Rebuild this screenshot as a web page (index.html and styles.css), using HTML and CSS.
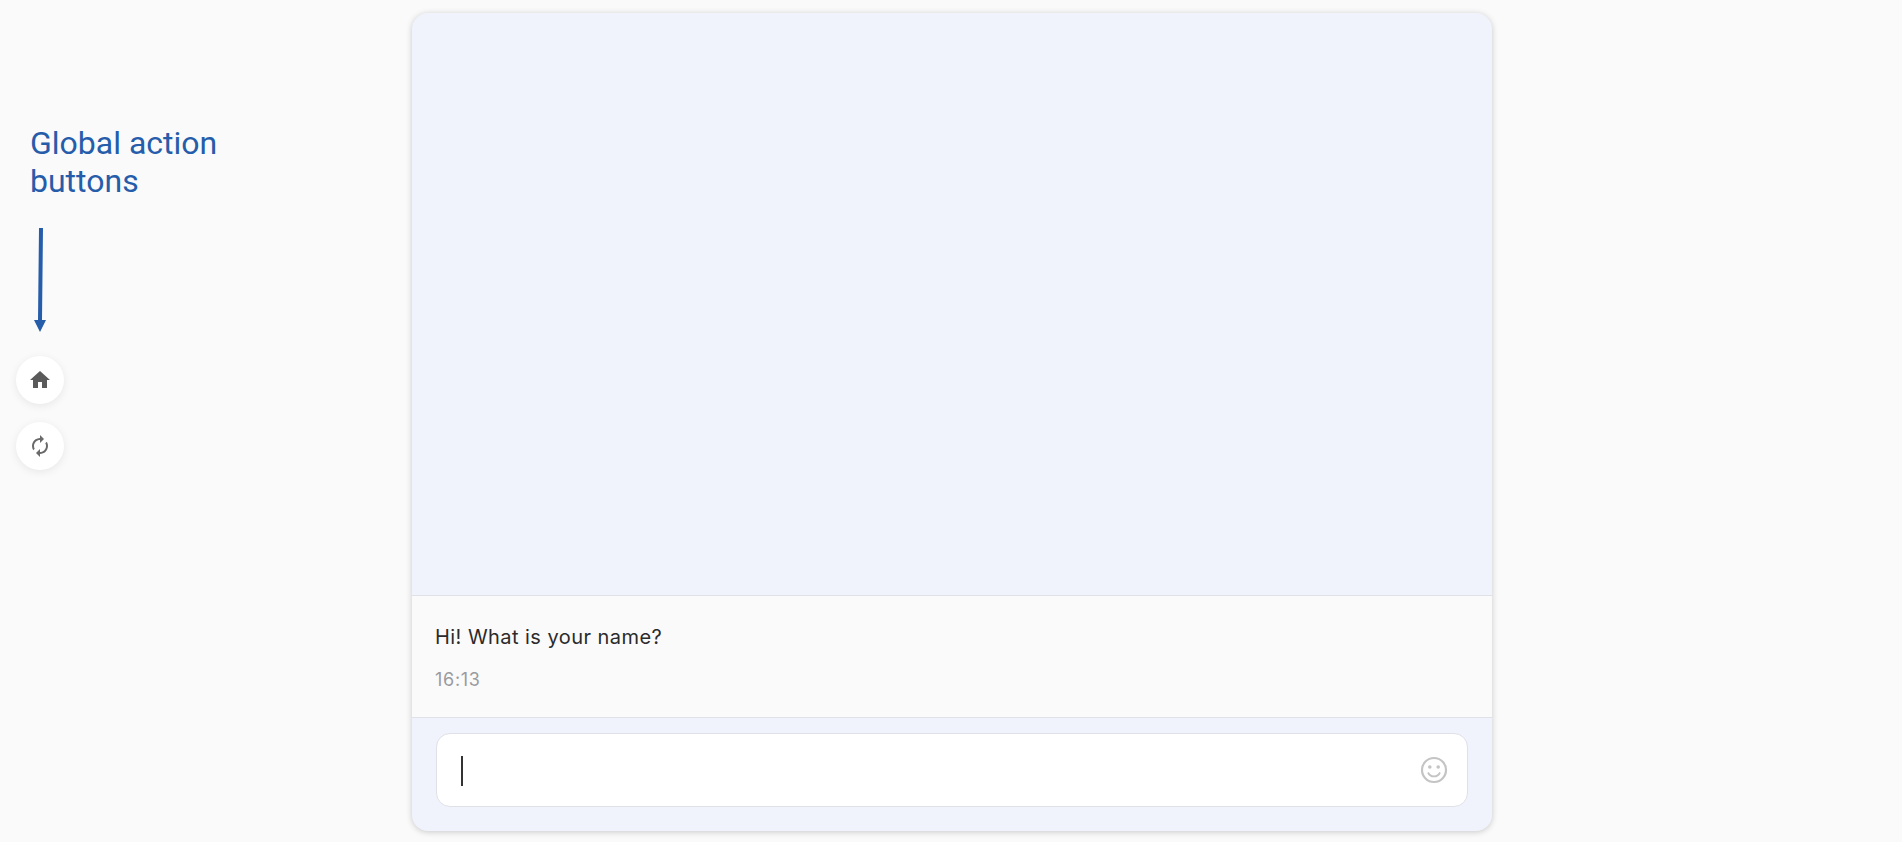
FILE: index.html
```html
<!DOCTYPE html>
<html lang="en">
<head>
    <meta charset="UTF-8">
    <title>Chat</title>
    <link rel="stylesheet" href="styles.css">
</head>
<body>
    <aside class="sidebar">
        <p class="note">Global action buttons</p>
        <svg class="arrow" width="14" height="104" viewBox="0 0 14 104">
            <path d="M6 0 L10 0 L9 92 L13 92 L7 104 L1 92 L5 92 Z" fill="#265dab"/>
        </svg>
        <button class="action">
            <svg width="24" height="24" viewBox="0 0 24 24"><path d="M10 20v-6h4v6h5v-8h3L12 3 2 12h3v8z" fill="#5a5a5a"/></svg>
        </button>
        <button class="action">
            <svg width="24" height="24" viewBox="0 0 24 24"><path d="M12 6v3l4-4-4-4v3c-4.420 0-8 3.580-8 8 0 1.570.46 3.030 1.240 4.260L6.700 14.800c-.45-.83-.7-1.790-.7-2.800 0-3.310 2.690-6 6-6zm6.760 1.740L17.300 9.200c.44.84.7 1.790.7 2.800 0 3.310-2.690 6-6 6v-3l-4 4 4 4v-3c4.420 0 8-3.580 8-8 0-1.570-.46-3.030-1.240-4.260z" fill="#6a6a6a"/></svg>
        </button>
    </aside>

    <main class="chat">
        <div class="history"></div>
        <div class="message">
            <p class="message-text">Hi! What is your name?</p>
            <span class="message-time">16:13</span>
        </div>
        <div class="composer">
            <div class="input-box">
                <span class="caret"></span>
                <svg class="smiley" width="30" height="30" viewBox="0 0 30 30">
                    <circle cx="15" cy="15" r="12" fill="none" stroke="#c4c4c4" stroke-width="2.200"/>
                    <circle cx="10.800" cy="12" r="1.800" fill="#c4c4c4"/>
                    <circle cx="19.200" cy="12" r="1.800" fill="#c4c4c4"/>
                    <path d="M9 17.500c1.200 2.600 3.300 3.900 6 3.900s4.800-1.300 6-3.900" fill="none" stroke="#c4c4c4" stroke-width="1.800"/>
                </svg>
            </div>
        </div>
    </main>
</body>
</html>
```

FILE: styles.css
```css
* {
    box-sizing: border-box;
}
html, body {
    height: 100%;
}
body {
    margin: 0;
    background: #fafafa;
    display: flex;
    overflow: hidden;
    font-family: Inter, "Noto Sans", sans-serif;
}
.sidebar {
    width: 412px;
    flex-shrink: 0;
    padding: 124px 0 0 16px;
}
.note {
    width: 210px;
    margin: 0 0 28px 14px;
    font-family: Roboto, sans-serif;
    font-size: 32px;
    line-height: 38px;
    color: #265dab;
}
.arrow {
    display: block;
    margin: 0 0 24px 17px;
}
.action {
    display: flex;
    align-items: center;
    justify-content: center;
    width: 48px;
    height: 48px;
    margin-bottom: 18px;
    padding: 0;
    border: 0;
    border-radius: 50%;
    background: #fff;
    box-shadow: 0 2px 8px rgba(0, 0, 0, 0.08);
}
.chat {
    width: 1080px;
    height: 818px;
    margin-top: 13px;
    display: flex;
    flex-direction: column;
    background: #f0f3fb;
    border-radius: 16px;
    box-shadow: 0 1px 6px rgba(0, 0, 0, 0.2);
    overflow: hidden;
}
.history {
    height: 582px;
}
.message {
    height: 123px;
    padding: 28px 23px 0;
    background: #fafafa;
    border-top: 1px solid #dfe0e8;
    border-bottom: 1px solid #dfe0e8;
}
.message-text {
    margin: 0 0 20px;
    font-size: 20px;
    line-height: 26px;
    letter-spacing: 0.45px;
    color: #2b2b2b;
}
.message-time {
    font-size: 18px;
    line-height: 20px;
    letter-spacing: 0.7px;
    color: #9a9a9f;
}
.composer {
    padding: 15px 24px 0;
}
.input-box {
    height: 74px;
    display: flex;
    align-items: center;
    justify-content: space-between;
    padding: 0 18px 0 24px;
    background: #fff;
    border: 1px solid #dfe0e8;
    border-radius: 14px;
}
.caret {
    width: 2px;
    height: 30px;
    margin-top: 1px;
    background: #333;
}
```
